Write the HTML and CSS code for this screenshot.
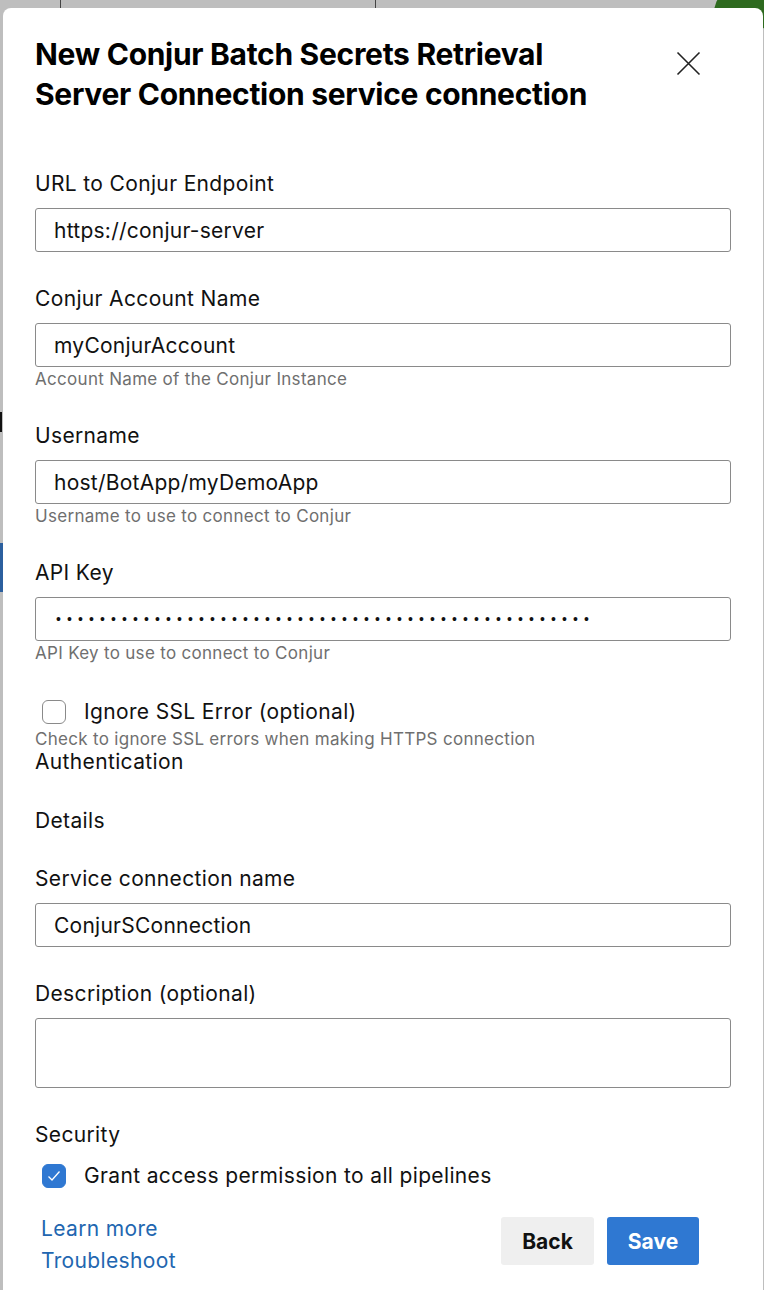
FILE: index.html
```html
<!DOCTYPE html>
<html lang="en">
<head>
<meta charset="utf-8">
<title>New service connection</title>
<link rel="stylesheet" href="styles.css">
</head>
<body>
<div class="backdrop" aria-hidden="true">
  <span class="bd-line bd-line-1"></span>
  <span class="bd-line bd-line-2"></span>
  <span class="bd-avatar"></span>
  <span class="bd-mark bd-mark-black"></span>
  <span class="bd-mark bd-mark-blue"></span>
</div>
<div class="dialog" role="dialog">
  <div class="header">
    <h1 class="title">New Conjur Batch Secrets Retrieval Server Connection service connection</h1>
    <button class="close" aria-label="Close">
      <svg width="25" height="25" viewBox="0 0 25 25"><path d="M1.5 1.5 L23.5 23.5 M23.5 1.5 L1.5 23.5" stroke="#222" stroke-width="1.6" fill="none"/></svg>
    </button>
  </div>

  <div class="form">
    <div class="field">
      <label class="label">URL to Conjur Endpoint</label>
      <input class="input" type="text" value="https://conjur-server">
    </div>
    <div class="field">
      <label class="label">Conjur Account Name</label>
      <input class="input" type="text" value="myConjurAccount">
      <div class="help">Account Name of the Conjur Instance</div>
    </div>
    <div class="field">
      <label class="label">Username</label>
      <input class="input" type="text" value="host/BotApp/myDemoApp">
      <div class="help">Username to use to connect to Conjur</div>
    </div>
    <div class="field field-last">
      <label class="label">API Key</label>
      <div class="input pw">•••••••••••••••••••••••••••••••••••••••••••••••••</div>
      <div class="help">API Key to use to connect to Conjur</div>
    </div>

    <div class="check-row check-ssl">
      <span class="box"></span>
      <span class="check-label">Ignore SSL Error (optional)</span>
    </div>
    <div class="help help-ssl">Check to ignore SSL errors when making HTTPS connection</div>
    <div class="section">Authentication</div>
    <div class="section section-details">Details</div>

    <div class="field">
      <label class="label">Service connection name</label>
      <input class="input" type="text" value="ConjurSConnection">
    </div>
    <div class="field">
      <label class="label">Description (optional)</label>
      <div class="input textarea"></div>
    </div>

    <div class="section">Security</div>
    <div class="check-row check-grant">
      <span class="box checked">
        <svg width="14" height="12" viewBox="0 0 14 12"><path d="M1.5 6.5 L5 10 L12.5 1.5" stroke="#fff" stroke-width="1.3" fill="none"/></svg>
      </span>
      <span class="check-label">Grant access permission to all pipelines</span>
    </div>
  </div>

  <div class="footer">
    <div class="links">
      <a class="link" href="#">Learn more</a>
      <a class="link" href="#">Troubleshoot</a>
    </div>
    <div class="buttons">
      <button class="btn btn-back">Back</button>
      <button class="btn btn-save">Save</button>
    </div>
  </div>
</div>
</body>
</html>
```

FILE: styles.css
```css
html, body {
  margin: 0;
  padding: 0;
  height: 100%;
  overflow: hidden;
}
body {
  background: #bebebe;
  font-family: "Inter", "Liberation Sans", sans-serif;
  color: #111;
  position: relative;
}
.backdrop {
  position: absolute;
  inset: 0;
  z-index: 0;
}
.bd-line {
  position: absolute;
  top: 0;
  width: 1px;
  height: 10px;
  background: #444;
}
.bd-line-1 { left: 60px; }
.bd-line-2 { left: 375px; }
.bd-avatar {
  position: absolute;
  left: 714px;
  top: -14px;
  width: 54px;
  height: 54px;
  border-radius: 50%;
  background: #2e6a1f;
}
.bd-mark {
  position: absolute;
  left: 0;
}
.bd-mark-black { top: 412px; height: 20px; width: 2px; background: #111; }
.bd-mark-blue { top: 543px; height: 49px; width: 3px; background: #2b5f9e; }

.dialog {
  position: relative;
  z-index: 1;
  margin: 8px 1px 0 3px;
  min-height: 1320px;
  background: #fff;
  border-radius: 8px 8px 0 0;
  padding: 26px 32px 0;
  box-sizing: border-box;
}
.header {
  display: flex;
  align-items: flex-start;
}
.title {
  flex: 1;
  margin: 0;
  font-size: 30px;
  line-height: 40px;
  font-weight: 700;
  letter-spacing: -0.3px;
  color: #000;
  padding-right: 40px;
}
.close {
  width: 40px;
  height: 40px;
  margin: 9px 23px 0 0;
  padding: 0;
  border: none;
  background: transparent;
  display: flex;
  align-items: center;
  justify-content: center;
}
.form {
  margin-top: 58px;
}
.field {
  margin-bottom: 35px;
}
.field-last {
  margin-bottom: 37px;
}
.label {
  display: block;
  font-size: 21px;
  line-height: 24px;
  letter-spacing: 0.35px;
  color: #111;
  margin-bottom: 12px;
}
.input {
  display: block;
  box-sizing: border-box;
  width: 100%;
  height: 44px;
  border: 1px solid #8a8a8a;
  border-radius: 3px;
  padding: 0 18px;
  font-family: "Inter", "Liberation Sans", sans-serif;
  font-size: 21px;
  letter-spacing: 0.25px;
  color: #111;
  background: #fff;
  outline: none;
}
.pw {
  display: flex;
  align-items: center;
  font-family: "Liberation Sans", sans-serif;
  font-size: 14px;
  letter-spacing: 6.1px;
  padding-left: 20px;
  overflow: hidden;
  white-space: nowrap;
}
.textarea {
  height: 70px;
}
.help {
  margin-top: 2px;
  font-size: 17px;
  line-height: 20px;
  letter-spacing: 0.3px;
  color: #6f6f6f;
}
.check-row {
  display: flex;
  align-items: center;
  height: 24px;
  padding-left: 7px;
}
.box {
  width: 24px;
  height: 24px;
  box-sizing: border-box;
  border: 1.5px solid #8a8a8a;
  border-radius: 6px;
  background: #fff;
  display: flex;
  align-items: center;
  justify-content: center;
  flex-shrink: 0;
}
.box.checked {
  background: #2f78d2;
  border-color: #2f78d2;
}
.check-label {
  margin-left: 18px;
  font-size: 21px;
  line-height: 24px;
  letter-spacing: 0.35px;
  color: #111;
}
.help-ssl {
  margin-top: 5px;
}
.section {
  font-size: 21px;
  line-height: 24px;
  letter-spacing: 0.35px;
  color: #111;
  margin-top: 1px;
}
.section-details {
  margin-top: 35px;
  margin-bottom: 34px;
}
.check-grant {
  margin-top: 17px;
}
.footer {
  display: flex;
  justify-content: space-between;
  align-items: flex-start;
  margin-top: 29px;
}
.links {
  display: flex;
  flex-direction: column;
  gap: 8px;
  padding-left: 6px;
}
.link {
  font-size: 21px;
  line-height: 24px;
  letter-spacing: 0.35px;
  color: #2266b0;
  text-decoration: none;
}
.buttons {
  display: flex;
  gap: 13px;
  margin-right: 32px;
}
.btn {
  height: 48px;
  border: none;
  border-radius: 3px;
  font-family: "Inter", "Liberation Sans", sans-serif;
  font-size: 21px;
  font-weight: 700;
  padding: 0;
}
.btn-back {
  width: 93px;
  background: #efefef;
  color: #111;
}
.btn-save {
  width: 92px;
  background: #2f78d2;
  color: #fff;
}
```
